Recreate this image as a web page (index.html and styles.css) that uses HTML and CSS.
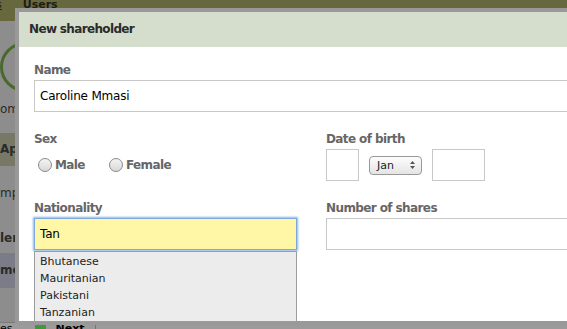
FILE: index.html
```html
<!DOCTYPE html>
<html lang="en">
<head>
    <meta charset="UTF-8">
    <title>New shareholder</title>
    <link rel="stylesheet" href="styles.css">
</head>
<body>
    <div class="page">
        <div class="topbar">
            <a class="top-link" href="#">s</a>
            <span class="top-title">Users</span>
        </div>
        <div class="sidebar">
            <div class="badge"><span>2</span></div>
            <div class="side-item side-om">om</div>
            <div class="side-item side-box">Ap</div>
            <div class="side-item side-mp">mp</div>
            <div class="side-item side-ler">ler:</div>
            <div class="side-item side-box side-blue">me</div>
        </div>
        <div class="footer">
            <span class="footer-prev">es</span>
            <span class="next-icon"></span>
            <span class="footer-next">Next</span>
        </div>
    </div>

    <div class="modal">
        <div class="modal-header">New shareholder</div>
        <form class="modal-body">
            <div class="field field-wide">
                <label>Name</label>
                <input type="text" class="text-input" value="Caroline Mmasi">
            </div>

            <div class="field">
                <label>Sex</label>
                <div class="radios">
                    <span class="radio"><span class="radio-dot"></span>Male</span>
                    <span class="radio"><span class="radio-dot"></span>Female</span>
                </div>
            </div>

            <div class="field">
                <label>Date of birth</label>
                <div class="dob">
                    <input type="text" class="text-input day">
                    <span class="month-select">Jan
                        <svg width="5" height="8" viewBox="0 0 5 8"><path d="M2.5 0 L5 3 L0 3 Z M0 5 L5 5 L2.5 8 Z" fill="#555"/></svg>
                    </span>
                    <input type="text" class="text-input year">
                </div>
            </div>

            <div class="field nationality">
                <label>Nationality</label>
                <input type="text" class="text-input focused" value="Tan">
                <ul class="suggestions">
                    <li>Bhutanese</li>
                    <li>Mauritanian</li>
                    <li>Pakistani</li>
                    <li>Tanzanian</li>
                </ul>
            </div>

            <div class="field">
                <label>Number of shares</label>
                <input type="text" class="text-input shares">
            </div>
        </form>
    </div>
</body>
</html>
```

FILE: styles.css
```css
* {
    margin: 0;
    padding: 0;
    box-sizing: border-box;
}

body {
    font-family: "DejaVu Sans", Verdana, sans-serif;
    background: #8d8d8d;
    width: 567px;
    height: 329px;
    overflow: hidden;
    position: relative;
}

/* dimmed page behind the dialog */
.page {
    height: 329px;
    display: flex;
    flex-direction: column;
}

.topbar {
    height: 21px;
    flex-shrink: 0;
    background: #68683f;
    display: flex;
    align-items: flex-start;
    gap: 21px;
    font-size: 11px;
    line-height: 9px;
    color: #1e1e14;
}

.top-link {
    color: #1e1e14;
    margin-left: -4px;
}

.top-title {
    font-weight: bold;
}

.sidebar {
    flex: 1;
    display: flex;
    flex-direction: column;
    font-size: 12px;
    color: #2a2a2a;
}

.badge {
    width: 50px;
    height: 50px;
    margin-top: 21px;
    border: 3px solid #4a6a2c;
    border-radius: 50%;
    display: flex;
    align-items: center;
    justify-content: center;
    font-size: 22px;
    color: #4a4a4a;
}

.side-item {
    line-height: 14px;
}

.side-om {
    margin-top: 10px;
}

.side-box {
    height: 33px;
    line-height: 33px;
    margin-top: 17px;
    background: #787866;
    font-weight: bold;
}

.side-mp {
    margin-top: 20px;
}

.side-ler {
    margin-top: 31px;
    font-weight: bold;
}

.side-blue {
    height: 35px;
    line-height: 35px;
    margin-top: 8px;
    background: #7c7c88;
}

.footer {
    height: 7px;
    flex-shrink: 0;
    margin-top: auto;
    background: #9b9b9b;
    border-top: 1px solid #7a7a7a;
    display: flex;
    align-items: flex-start;
    gap: 10px;
    font-size: 11px;
    line-height: 11px;
    overflow: hidden;
}

.next-icon {
    width: 11px;
    height: 7px;
    margin-left: 12px;
    margin-top: 1px;
    background: #3c9a3c;
    border-radius: 2px 2px 0 0;
}

.footer-next {
    font-weight: bold;
    padding-right: 10px;
    border-right: 1px solid #777;
}

/* dialog */
.modal {
    position: absolute;
    left: 15px;
    top: 8px;
    width: 600px;
    height: 317px;
    border: 4px solid #999;
    background: #fff;
}

.modal-header {
    height: 35px;
    background: #d5ddcc;
    padding: 0 10px;
    font-size: 12px;
    letter-spacing: -0.65px;
    font-weight: bold;
    line-height: 35px;
    color: #2b2b2b;
}

.modal-body {
    padding: 15px 0 0 15px;
    display: grid;
    grid-template-columns: 263px 600px;
    column-gap: 29px;
    row-gap: 19px;
}

.field {
    display: flex;
    flex-direction: column;
    gap: 2px;
}

.field-wide {
    grid-column: 1 / -1;
}

label {
    font-size: 12px;
    letter-spacing: -0.6px;
    font-weight: bold;
    line-height: 16px;
    color: #666;
}

.text-input {
    height: 32px;
    border: 1px solid #c8c8c8;
    padding: 0 5px;
    font-family: inherit;
    font-size: 12px;
    letter-spacing: -0.2px;
    color: #000;
    background: #fff;
    outline: none;
}

.radios {
    height: 32px;
    display: flex;
    align-items: center;
    gap: 24px;
    padding-left: 4px;
}

.radio {
    display: flex;
    align-items: center;
    gap: 3px;
    font-size: 12px;
    letter-spacing: -0.6px;
    font-weight: bold;
    color: #666;
}

.radio-dot {
    width: 14px;
    height: 14px;
    border-radius: 50%;
    border: 1px solid #8a8a8a;
    background: linear-gradient(#f4f4f4, #d8d8d8);
}

.dob {
    display: flex;
    align-items: center;
    gap: 10px;
}

.day {
    width: 33px;
}

.year {
    width: 53px;
}

.month-select {
    width: 53px;
    height: 19px;
    border: 1px solid #999;
    border-radius: 4px;
    background: linear-gradient(#fdfdfd, #e4e4e4);
    display: flex;
    align-items: center;
    justify-content: space-between;
    padding: 0 6px 0 7px;
    font-size: 11px;
    color: #222;
}

.nationality {
    position: relative;
}

.focused {
    background: #fff6a6;
    border-color: #7ea8da;
    box-shadow: 0 0 2px 1px #8bb5e6;
}

.suggestions {
    position: absolute;
    left: 0;
    top: 51px;
    width: 263px;
    list-style: none;
    background: #ececec;
    border: 1px solid #9c9c9c;
    padding-top: 1px;
    font-size: 11px;
    color: #222;
}

.suggestions li {
    height: 17px;
    line-height: 17px;
    padding-left: 5px;
}

.shares {
    width: 260px;
}
```
